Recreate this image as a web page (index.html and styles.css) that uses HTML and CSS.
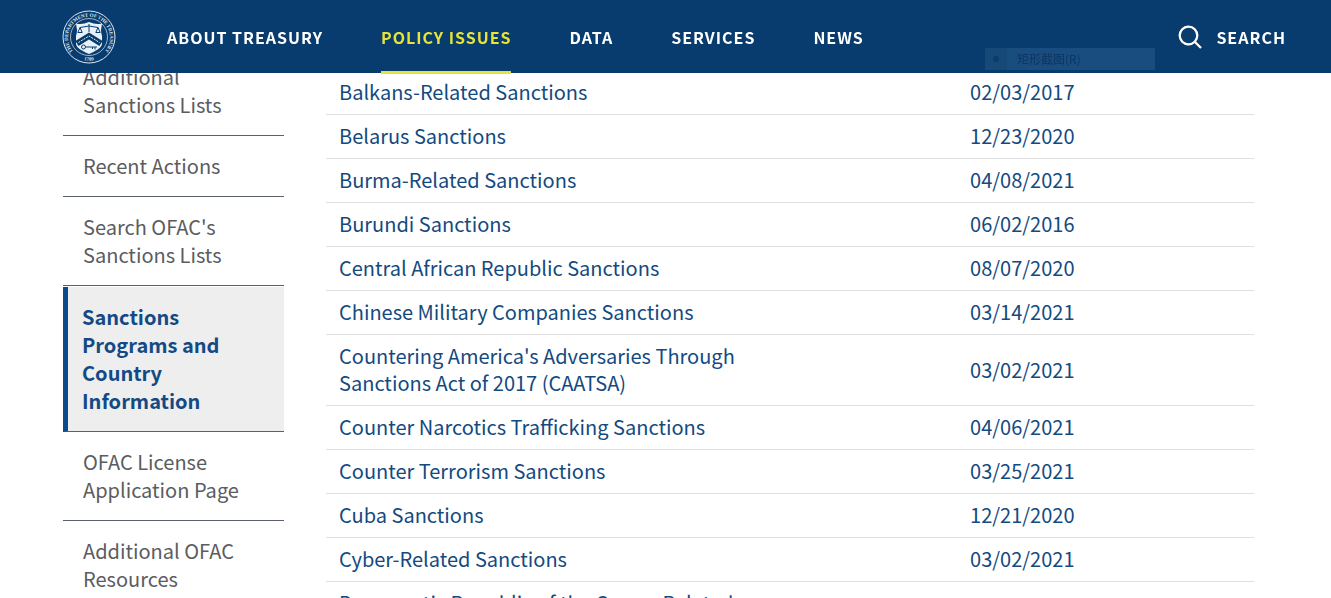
FILE: index.html
```html
<!DOCTYPE html>
<html lang="en">
<head>
<meta charset="utf-8">
<title>Sanctions Programs and Country Information</title>
<link rel="stylesheet" href="styles.css">
</head>
<body>
<header class="header">
  <a class="logo" href="#" aria-label="U.S. Department of the Treasury">
    <svg class="seal" viewBox="0 0 54 54" aria-hidden="true">
      <defs>
        <path id="arc-top" d="M14.500 44.500A21 21 0 1 1 39.500 44.500"/>
        <path id="arc-bottom" d="M15 47.500A23.800 23.800 0 0 0 39 47.500"/>
      </defs>
      <circle class="seal-line" cx="27" cy="27" r="26"/>
      <circle class="seal-line seal-thin" cx="27" cy="27" r="18.500"/>
      <text class="seal-text"><textPath href="#arc-top" startOffset="50%" text-anchor="middle">THE DEPARTMENT OF THE TREASURY</textPath></text>
      <text class="seal-text"><textPath href="#arc-bottom" startOffset="50%" text-anchor="middle">1789</textPath></text>
      <path class="seal-fill" d="M14 13.500Q20 15 27 12Q34 15 40 13.500L39 20Q39 23 40 26V34C39 39 33 41 27 44C21 41 15 39 14 34V26Q15 23 15 20Z"/>
      <path class="seal-ink" d="M18 17.500L27 16L36 17.500M27 14V22M18 17.500L15.800 22.500H20.200ZM36 17.500L33.800 22.500H38.200Z"/>
      <path class="seal-chevron" d="M15 33.500L27 26L39 33.500"/>
      <path class="seal-stars" d="M16.500 32.500L27 26L37.500 32.500"/>
      <path class="seal-ink" d="M23.500 37H35M33 37V39.500M30.500 37V39"/>
      <circle class="seal-ink" cx="21.500" cy="37" r="2"/>
    </svg>
  </a>
  <nav class="nav" aria-label="Main">
    <a class="nav-link" href="#">ABOUT TREASURY</a>
    <a class="nav-link nav-link-active" href="#">POLICY ISSUES</a>
    <a class="nav-link" href="#">DATA</a>
    <a class="nav-link" href="#">SERVICES</a>
    <a class="nav-link" href="#">NEWS</a>
  </nav>
  <button class="search" type="button">
    <svg class="search-icon" viewBox="0 0 24 24" aria-hidden="true"><circle cx="10.500" cy="10.500" r="8.800"/><path d="M16.500 16.500L23 23"/></svg>
    SEARCH
  </button>
  <div class="ghost-menu" lang="zh-CN"><span class="ghost-dot"></span><span class="ghost-label">矩形截图(R)</span></div>
</header>
<div class="page">
  <aside class="sidebar">
    <a class="side-link" href="#">Additional Sanctions Lists</a>
    <a class="side-link" href="#">Recent Actions</a>
    <a class="side-link" href="#">Search OFAC's Sanctions Lists</a>
    <a class="side-link side-link-active" href="#">Sanctions Programs and Country Information</a>
    <a class="side-link" href="#">OFAC License Application Page</a>
    <a class="side-link" href="#">Additional OFAC Resources</a>
  </aside>
  <main class="content">
    <table class="programs">
      <tbody>
        <tr><td class="name"><a href="#">Balkans-Related Sanctions</a></td><td><a href="#">02/03/2017</a></td></tr>
        <tr><td class="name"><a href="#">Belarus Sanctions</a></td><td><a href="#">12/23/2020</a></td></tr>
        <tr><td class="name"><a href="#">Burma-Related Sanctions</a></td><td><a href="#">04/08/2021</a></td></tr>
        <tr><td class="name"><a href="#">Burundi Sanctions</a></td><td><a href="#">06/02/2016</a></td></tr>
        <tr><td class="name"><a href="#">Central African Republic Sanctions</a></td><td><a href="#">08/07/2020</a></td></tr>
        <tr><td class="name"><a href="#">Chinese Military Companies Sanctions</a></td><td><a href="#">03/14/2021</a></td></tr>
        <tr><td class="name"><a href="#">Countering America's Adversaries Through Sanctions Act of 2017 (CAATSA)</a></td><td><a href="#">03/02/2021</a></td></tr>
        <tr><td class="name"><a href="#">Counter Narcotics Trafficking Sanctions</a></td><td><a href="#">04/06/2021</a></td></tr>
        <tr><td class="name"><a href="#">Counter Terrorism Sanctions</a></td><td><a href="#">03/25/2021</a></td></tr>
        <tr><td class="name"><a href="#">Cuba Sanctions</a></td><td><a href="#">12/21/2020</a></td></tr>
        <tr><td class="name"><a href="#">Cyber-Related Sanctions</a></td><td><a href="#">03/02/2021</a></td></tr>
        <tr><td class="name"><a href="#">Democratic Republic of the Congo-Related Sanctions</a></td><td></td></tr>
      </tbody>
    </table>
  </main>
</div>
</body>
</html>
```
FILE: styles.css
```css
* {
  box-sizing: border-box;
}

body {
  margin: 0;
  background: #fff;
  font-family: "Noto Sans CJK SC", "Open Sans", sans-serif;
  font-size: 20px;
}

a {
  color: inherit;
  text-decoration: none;
}

.header {
  position: fixed;
  top: 0;
  left: 0;
  right: 0;
  z-index: 1;
  display: flex;
  align-items: center;
  height: 73px;
  padding: 0 45px 0 62px;
  background: #093c6e;
  color: #fff;
}

.logo {
  display: flex;
}

.seal {
  width: 54px;
  height: 54px;
}

.seal-line {
  fill: none;
  stroke: #dce8f2;
  stroke-width: 1;
}

.seal-thin {
  stroke-width: 0.7;
}

.seal-text {
  fill: #dce8f2;
  font-family: "Liberation Serif", serif;
  font-size: 5px;
  font-weight: bold;
}

.seal-fill {
  fill: #e8f1f8;
}

.seal-ink {
  fill: none;
  stroke: #093c6e;
  stroke-width: 1;
}

.seal-chevron {
  fill: none;
  stroke: #093c6e;
  stroke-width: 6;
}

.seal-stars {
  fill: none;
  stroke: #e8f1f8;
  stroke-width: 1;
  stroke-dasharray: 2 1;
}

.nav {
  display: flex;
  align-self: flex-start;
  gap: 58px;
  margin-left: 51px;
}

.nav-link {
  height: 74px;
  border-bottom: 3px solid transparent;
  font-size: 16px;
  font-weight: 700;
  line-height: 75px;
  letter-spacing: 1px;
}

.nav-link-active {
  border-color: #e8e337;
  color: #e8e337;
}

.search {
  display: flex;
  align-items: center;
  gap: 14px;
  margin-left: auto;
  padding: 0;
  border: 0;
  background: none;
  color: #fff;
  font: inherit;
  font-size: 16px;
  font-weight: 700;
  letter-spacing: 1px;
}

.search-icon {
  width: 24px;
  height: 24px;
  fill: none;
  stroke: #fff;
  stroke-width: 2.3;
}

.ghost-menu {
  position: absolute;
  right: 176px;
  bottom: 3px;
  display: flex;
  width: 170px;
  height: 22px;
  background: #1a4d7f;
  color: #0b3562;
  font-size: 12px;
  line-height: 22px;
}

.ghost-dot {
  display: flex;
  align-items: center;
  justify-content: center;
  width: 22px;
  background: #164878;
}

.ghost-dot::before {
  content: "";
  width: 6px;
  height: 6px;
  border-radius: 50%;
  background: #0e3a69;
}

.ghost-label {
  padding-left: 10px;
}

.page {
  display: flex;
  gap: 42px;
  height: 100vh;
  padding: 47px 77px 0 63px;
  overflow: hidden;
}

.sidebar {
  flex: 0 0 221px;
  color: #5b5c5f;
}

.side-link {
  display: block;
  padding: 16px 20px;
  border-bottom: 1px solid #5b616b;
  line-height: 28px;
}

.side-link-active {
  margin-top: 1px;
  padding-left: 14px;
  border-left: 5px solid #0b4a8b;
  background: #eee;
  color: #134a85;
  font-weight: 700;
}

.content {
  flex: 1;
  padding-top: 24px;
}

.programs {
  width: 100%;
  border-collapse: separate;
  border-spacing: 0;
  table-layout: fixed;
  color: #134a80;
  line-height: 27px;
}

.programs td {
  padding: 7px 13px 9px;
  border-bottom: 1px solid #dfdfdf;
}

.programs .name {
  width: 68%;
  padding-right: 180px;
}
```
